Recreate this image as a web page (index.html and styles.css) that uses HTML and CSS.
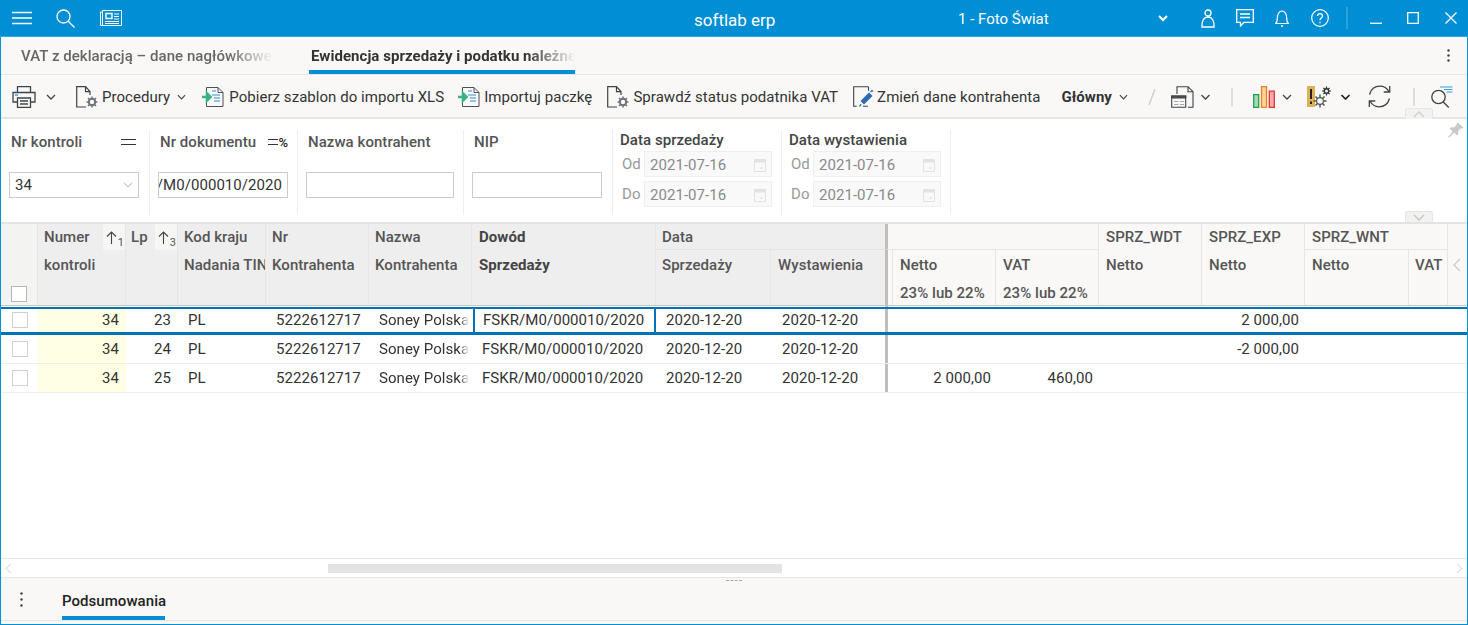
FILE: index.html
```html
<!DOCTYPE html>
<html lang="pl">
<head>
<meta charset="utf-8">
<title>softlab erp</title>
<link rel="stylesheet" href="styles.css">
</head>
<body>
<div class="app">
  <header class="titlebar">
    <svg class="ic m12" width="20" height="14" viewBox="0 0 20 14"><path d="M0 1.500h20M0 7h20M0 12.500h20" stroke="#fff" stroke-width="1.300"/></svg>
    <svg class="ic m24" width="19" height="19" viewBox="0 0 19 19" fill="none" stroke="#fff" stroke-width="1.300"><circle cx="7.500" cy="7.500" r="6.500"/><path d="M12 12l6.500 6.500"/></svg>
    <svg class="ic m25" width="22" height="18" viewBox="0 0 22 18" fill="none" stroke="#fff"><path d="M2.500 1.500h19v15h-19zM2.500 3H.5v13.500h2"/><path d="M6 4.500h6v5H6z" stroke-width="1.400"/><path d="M14 5h5M14 7.500h5M14 10h5M5 12.500h14M5 14.500h14" stroke-width="1.200"/></svg>
    <span class="apptitle">softlab erp</span>
    <span class="company">1 - Foto Świat</span>
    <svg class="ic m110" width="10" height="7" viewBox="0 0 10 7" fill="none" stroke="#fff" stroke-width="2"><path d="M1 1l4 4 4-4"/></svg>
    <svg class="ic m33" width="14" height="19" viewBox="0 0 14 19" fill="none" stroke="#fff" stroke-width="1.300"><circle cx="7" cy="4" r="3"/><path d="M1 18c-.5-6 2-10 6-10s6.500 4 6 10z"/></svg>
    <svg class="ic m21" width="18" height="18" viewBox="0 0 18 18" fill="none" stroke="#fff" stroke-width="1.300"><path d="M.7.7h16.600v12.600H8L4.500 17v-3.700H.7z"/><path d="M4 5h10M4 8.500h10"/></svg>
    <svg class="ic m21" width="14" height="18" viewBox="0 0 14 18" fill="none" stroke="#fff" stroke-width="1.200"><path d="M.5 14.500c1.500-1 1.800-2.500 1.800-5.500 0-4 2-7 4.700-7s4.700 3 4.700 7c0 3 .3 4.500 1.800 5.500z"/><path d="M6 17h2" stroke-width="1.500"/></svg>
    <svg class="ic m22" width="18" height="18" viewBox="0 0 18 18" fill="none" stroke="#fff" stroke-width="1.200"><circle cx="9" cy="9" r="8.300"/><path d="M6.500 7c0-3.300 5-3.300 5 0 0 2-2.500 2-2.500 4.200M9 12.800v1.400" stroke-width="1.300"/></svg>
    <span class="titlesep"></span>
    <svg class="ic m22" width="12" height="12" viewBox="0 0 12 12" fill="none" stroke="#fff" stroke-width="1.300"><path d="M0 11.300h12"/></svg>
    <svg class="ic m25" width="12" height="12" viewBox="0 0 12 12" fill="none" stroke="#fff" stroke-width="1.300"><path d="M.7.7h10.600v10.600H.7z"/></svg>
    <svg class="ic m26" width="12" height="12" viewBox="0 0 12 12" fill="none" stroke="#fff" stroke-width="1.300"><path d="M.5.5l11 11M11.500.5l-11 11"/></svg>
  </header>

  <nav class="tabs">
    <span class="tab tab-first"><span class="fade">VAT z deklaracją – dane nagłówkowe</span></span>
    <span class="tab tab-active"><span class="fade">Ewidencja sprzedaży i podatku należne</span></span>
    <span class="spacer"></span>
    <svg class="ic kebab" width="3" height="13" viewBox="0 0 3 13" fill="#444"><circle cx="1.500" cy="1.500" r="1.200"/><circle cx="1.500" cy="6.500" r="1.200"/><circle cx="1.500" cy="11.500" r="1.200"/></svg>
  </nav>

  <div class="toolbar">
    <svg class="ic t12" width="24" height="22" viewBox="0 0 24 22" fill="none" stroke="#3c4348" stroke-width="1.300"><path d="M5.500 6V.7h13V6M5 16H1V6.500h22V16h-4"/><path d="M5.500 12h13v9.300h-13z"/><path d="M8 15h8M8 18h8"/><path d="M3 9h3" stroke="#2f8fd0"/></svg>
    <svg class="ic t10 chev" width="10" height="6" viewBox="0 0 10 6"><path d="M1 1l4 4 4-4"/></svg>
    <svg class="ic t20" width="22" height="22" viewBox="0 0 22 22" fill="none" stroke="#3c4348" stroke-width="1.200"><path d="M10 21H.7V.7h8.800L14 5.500V9M9.500.7v5H14"/><circle cx="16" cy="16" r="3.200" stroke="#6d7378" stroke-width="2"/><path d="M16 10.500v2M16 19.500v2M10.500 16h2M19.500 16h2M12 12l1.500 1.500M18.500 18.500L20 20M20 12l-1.500 1.500M13.500 18.500L12 20" stroke="#6d7378" stroke-width="1.500"/></svg>
    <span class="tl t4">Procedury</span>
    <svg class="ic t7 chev" width="9" height="6" viewBox="0 0 10 6"><path d="M1 1l4 4 4-4"/></svg>
    <svg class="ic t15" width="23" height="20" viewBox="0 0 23 20" fill="none"><path d="M5.500 5V.5h11.500l5 5v14H5.500v-4M17 .5v5h5" stroke="#4a5157" stroke-width="1"/><path d="M11 4h4M11 8h8M13 11h6M13 14h6" stroke="#2f8fd0" stroke-width="1.200"/><path d="M1 10h4.500M6 6.500l3.500 3.500L6 13.500z" fill="#3cb187" stroke="#3cb187" stroke-width="2.600"/></svg>
    <span class="tl t5">Pobierz szablon do importu XLS</span>
    <svg class="ic t13" width="23" height="20" viewBox="0 0 23 20" fill="none"><path d="M5.500 5V.5h11.500l5 5v14H5.500v-4M17 .5v5h5" stroke="#4a5157" stroke-width="1"/><path d="M11 4h4M11 8h8M13 11h6M13 14h6" stroke="#2f8fd0" stroke-width="1.200"/><path d="M1 10h4.500M6 6.500l3.500 3.500L6 13.500z" fill="#3cb187" stroke="#3cb187" stroke-width="2.600"/></svg>
    <span class="tl t4">Importuj paczkę</span>
    <svg class="ic t15" width="22" height="22" viewBox="0 0 22 22" fill="none" stroke="#3c4348" stroke-width="1.200"><path d="M10 21H.7V.7h8.800L14 5.500V9M9.500.7v5H14"/><circle cx="16" cy="16" r="3.200" stroke="#6d7378" stroke-width="2"/><path d="M16 10.500v2M16 19.500v2M10.500 16h2M19.500 16h2M12 12l1.500 1.500M18.500 18.500L20 20M20 12l-1.500 1.500M13.500 18.500L12 20" stroke="#6d7378" stroke-width="1.500"/></svg>
    <span class="tl t4">Sprawdź status podatnika VAT</span>
    <svg class="ic t15" width="21" height="21" viewBox="0 0 21 21" fill="none"><path d="M15.500 .7H.7v19.600h3M15.500 .7v4M10 20.300h5" stroke="#3c4348" stroke-width="1.100"/><path d="M6.500 20.500l1.500-2.500M8.500 15l7.500-7.500 2.500 2.500-7.500 7.500z" fill="#2b6cb0" stroke="#2b6cb0" stroke-width="1.400"/><path d="M17.500 6l1.500-1.500 1 1" stroke="#2b6cb0" stroke-width="1.200"/></svg>
    <span class="tl t3">Zmień dane kontrahenta</span>
    <span class="tl strong t21">Główny</span>
    <svg class="ic t7 chev" width="9" height="6" viewBox="0 0 10 6"><path d="M1 1l4 4 4-4"/></svg>
    <svg class="ic t20" width="8" height="18" viewBox="0 0 8 18" fill="none" stroke="#cfcfcf" stroke-width="1.500"><path d="M7 1L1 17"/></svg>
    <svg class="ic t15" width="23" height="22" viewBox="0 0 23 22" fill="none" stroke="#3c4348" stroke-width="1.100"><path d="M6 8V.7h11l5 5v15.600h-5M17 .7v5h5"/><path d="M.7 10h14v11.300H.7z" fill="#f9f8f6"/><path d="M.7 10h14v2H.7z" fill="#555"/><path d="M3 15.500h4.500M9 15.500h4M3 18.500h4.500M9 18.500h4" stroke="#aaa"/></svg>
    <svg class="ic t6 chev" width="11" height="6" viewBox="0 0 10 6"><path d="M1 1l4 4 4-4"/></svg>
    <span class="vsep t20"></span>
    <svg class="ic t20" width="22" height="22" viewBox="0 0 22 22"><path d="M.7 8.700h5v12.600h-5z" fill="#a6d8b5" stroke="#1ba24d" stroke-width="1.300"/><path d="M8.500.7h5v20.600h-5z" fill="#fbd596" stroke="#ee7d2b" stroke-width="1.300"/><path d="M16.300 5.200h5v16.100h-5z" fill="#f5abab" stroke="#e23333" stroke-width="1.300"/></svg>
    <svg class="ic t7 chev" width="10" height="6" viewBox="0 0 10 6"><path d="M1 1l4 4 4-4"/></svg>
    <svg class="ic t15" width="24" height="22" viewBox="0 0 24 22" fill="none"><path d="M0 0h8v21H0z" fill="#dcb257"/><path d="M4 3v10M4 15.500v2.500" stroke="#222" stroke-width="2"/><circle cx="13" cy="15" r="3.400" stroke="#50575c" stroke-width="1.200"/><path d="M13 8.500v2.500M13 19v2.500M6.500 15H9M17 15h2.500M8.500 10.500l2 2M15.500 17.500l2 2M17.500 10.500l-2 2M10.500 17.500l-2 2" stroke="#50575c" stroke-width="1.500"/><circle cx="19.500" cy="5" r="2.200" stroke="#2c3236" stroke-width="1.400"/><path d="M19.500 .5v2M19.500 7.500v2M15 5h2M22 5h2M16.300 1.800l1.400 1.400M21.300 6.800l1.400 1.400M22.700 1.800l-1.400 1.400M17.700 6.800l-1.400 1.400" stroke="#2c3236" stroke-width="1.200"/></svg>
    <svg class="ic t9 chev chev-b" width="11" height="6" viewBox="0 0 10 6"><path d="M1 1l4 4 4-4"/></svg>
    <svg class="ic t17" width="23" height="23" viewBox="0 0 23 23" fill="none" stroke="#3c4348" stroke-width="1.300"><path d="M1.500 9.500C3 4 7 1.200 12 1.200c4 0 7 2 9 5.500M21.700 1v6h-6M21.500 13.500c-1.500 5.500-5.500 8.300-10.500 8.300-4 0-7-2-9-5.500M1.300 22v-6h6"/></svg>
    <span class="vsep t22"></span>
    <svg class="ic t16" width="22" height="22" viewBox="0 0 22 22" fill="none"><circle cx="7.500" cy="11" r="6.700" stroke="#3c4348" stroke-width="1.300"/><path d="M12.300 16l5.500 5.500" stroke="#3c4348" stroke-width="1.300"/><path d="M9 1h12.500M13 3.500h8.500M15.500 6h6" stroke="#2f9fe0" stroke-width="1.100"/></svg>
    <span class="collapse collapse-up"><svg width="12" height="7" viewBox="0 0 12 7" fill="none" stroke="#cfcfcf" stroke-width="1.300"><path d="M1 6l5-5 5 5"/></svg></span>
  </div>

  <section class="filters">
    <div class="fgroup f1">
      <div class="flabel"><span>Nr kontroli</span><span class="op"><span class="eq"></span></span></div>
      <div class="fcombo"><span>34</span><svg width="10" height="6" viewBox="0 0 10 6" fill="none" stroke="#ccc" stroke-width="1.200"><path d="M1 1l4 4 4-4"/></svg></div>
    </div>
    <div class="fgroup f2">
      <div class="flabel"><span>Nr dokumentu</span><span class="op"><span class="eq eq-s"></span><b>%</b></span></div>
      <div class="finput finput-clip"><span>FSKR/M0/000010/2020</span></div>
    </div>
    <div class="fgroup f3">
      <div class="flabel"><span>Nazwa kontrahent</span></div>
      <div class="finput"></div>
    </div>
    <div class="fgroup f4">
      <div class="flabel"><span>NIP</span></div>
      <div class="finput"></div>
    </div>
    <div class="fgroup fdate">
      <div class="dlabel">Data sprzedaży</div>
      <div class="drow"><span>Od</span><div class="dinput"><span>2021-07-16</span><svg width="13" height="14" viewBox="0 0 13 14"><path d="M1.500 1.500v12h11v-12z" fill="none" stroke="#e2e2e2"/><path d="M1 2h11v2.500H1z" fill="#e2e2e2"/><path d="M7.500 9h2v2h-2z" fill="#e2e2e2"/></svg></div></div>
      <div class="drow"><span>Do</span><div class="dinput"><span>2021-07-16</span><svg width="13" height="14" viewBox="0 0 13 14"><path d="M1.500 1.500v12h11v-12z" fill="none" stroke="#e2e2e2"/><path d="M1 2h11v2.500H1z" fill="#e2e2e2"/><path d="M7.500 9h2v2h-2z" fill="#e2e2e2"/></svg></div></div>
    </div>
    <div class="fgroup fdate">
      <div class="dlabel">Data wystawienia</div>
      <div class="drow"><span>Od</span><div class="dinput"><span>2021-07-16</span><svg width="13" height="14" viewBox="0 0 13 14"><path d="M1.500 1.500v12h11v-12z" fill="none" stroke="#e2e2e2"/><path d="M1 2h11v2.500H1z" fill="#e2e2e2"/><path d="M7.500 9h2v2h-2z" fill="#e2e2e2"/></svg></div></div>
      <div class="drow"><span>Do</span><div class="dinput"><span>2021-07-16</span><svg width="13" height="14" viewBox="0 0 13 14"><path d="M1.500 1.500v12h11v-12z" fill="none" stroke="#e2e2e2"/><path d="M1 2h11v2.500H1z" fill="#e2e2e2"/><path d="M7.500 9h2v2h-2z" fill="#e2e2e2"/></svg></div></div>
    </div>
    <svg class="pin" width="16" height="16" viewBox="0 0 16 16" fill="#c9c9c9"><path d="M9.500.5l6 5-1.500 1.300-1-.5-3 3 .3 3-1.300 1.200-3-3L1 15.500 0 15l4.500-5.500-2.800-3L3 5.200l3 .3 3-3-.5-1z"/></svg>
    <span class="collapse collapse-down"><svg width="12" height="7" viewBox="0 0 12 7" fill="none" stroke="#c4c4c4" stroke-width="1.300"><path d="M1 1l5 5 5-5"/></svg></span>
  </section>

  <section class="grid">
    <div class="ghead">
      <div class="hc hc-check"><span class="cb cb-head"></span></div>
      <div class="hc hc-numer"><div class="hline"><span>Numer</span><span class="sort"><svg width="11" height="13" viewBox="0 0 11 13" fill="none" stroke="#444" stroke-width="1.100"><path d="M5.500 13V1M1 5.500L5.500 1 10 5.500"/></svg><i>1</i></span></div><div class="hline">kontroli</div></div>
      <div class="hc hc-lp"><div class="hline"><span>Lp</span><span class="sort"><svg width="11" height="13" viewBox="0 0 11 13" fill="none" stroke="#444" stroke-width="1.100"><path d="M5.500 13V1M1 5.500L5.500 1 10 5.500"/></svg><i>3</i></span></div></div>
      <div class="hc hc-kod"><div class="hline">Kod kraju</div><div class="hline clip">Nadania TIN</div></div>
      <div class="hc hc-nr"><div class="hline">Nr</div><div class="hline">Kontrahenta</div></div>
      <div class="hc hc-naz"><div class="hline">Nazwa</div><div class="hline">Kontrahenta</div></div>
      <div class="hc hc-dow strong"><div class="hline">Dowód</div><div class="hline">Sprzedaży</div></div>
      <div class="hc hc-data"><div class="hline">Data</div></div>
      <div class="hc hc-dsp"><div class="hline">Sprzedaży</div></div>
      <div class="hc hc-dwy"><div class="hline">Wystawienia</div></div>
      <div class="hc lt hc-blank"></div>
      <div class="hc lt hc-gap"></div>
      <div class="hc lt hc-net"><div class="hline">Netto</div><div class="hline">23% lub 22%</div></div>
      <div class="hc lt hc-vat"><div class="hline">VAT</div><div class="hline">23% lub 22%</div></div>
      <div class="hc lt hc-wdt"><div class="hline">SPRZ_WDT</div><div class="hline">Netto</div></div>
      <div class="hc lt hc-exp"><div class="hline">SPRZ_EXP</div><div class="hline">Netto</div></div>
      <div class="hc lt hc-wnt"><div class="hline">SPRZ_WNT</div></div>
      <div class="hc lt hc-wn"><div class="hline">Netto</div></div>
      <div class="hc lt hc-wv"><div class="hline">VAT</div></div>
      <div class="hc lt hc-arrow"><svg width="8" height="14" viewBox="0 0 8 14" fill="none" stroke="#c8c8c8" stroke-width="1.200"><path d="M7 1L1 7l6 6"/></svg></div>
    </div>
    <div class="gbody">
      <div class="row row-sel">
        <div class="c"><span class="cb"></span></div><div class="c c-key">34</div><div class="c r">23</div><div class="c pad">PL</div><div class="c pad">5222612717</div><div class="c pad fadecell">Soney Polska</div><div class="c pad c-cur">FSKR/M0/000010/2020</div><div class="c pad">2020-12-20</div><div class="c pad pad-w">2020-12-20</div><div class="c c-div"></div><div class="c money"></div><div class="c money"></div><div class="c money"></div><div class="c money">2 000,00</div><div class="c"></div><div class="c"></div><div class="c"></div>
      </div>
      <div class="row">
        <div class="c"><span class="cb"></span></div><div class="c c-key">34</div><div class="c r">24</div><div class="c pad">PL</div><div class="c pad">5222612717</div><div class="c pad fadecell">Soney Polska</div><div class="c pad">FSKR/M0/000010/2020</div><div class="c pad">2020-12-20</div><div class="c pad pad-w">2020-12-20</div><div class="c c-div"></div><div class="c money"></div><div class="c money"></div><div class="c money"></div><div class="c money">-2 000,00</div><div class="c"></div><div class="c"></div><div class="c"></div>
      </div>
      <div class="row">
        <div class="c"><span class="cb"></span></div><div class="c c-key">34</div><div class="c r">25</div><div class="c pad">PL</div><div class="c pad">5222612717</div><div class="c pad fadecell">Soney Polska</div><div class="c pad">FSKR/M0/000010/2020</div><div class="c pad">2020-12-20</div><div class="c pad pad-w">2020-12-20</div><div class="c c-div"></div><div class="c money">2 000,00</div><div class="c money">460,00</div><div class="c money"></div><div class="c money"></div><div class="c"></div><div class="c"></div><div class="c"></div>
      </div>
    </div>
    <div class="hscroll">
      <svg width="7" height="11" viewBox="0 0 7 11" fill="none" stroke="#e2e2e2" stroke-width="1.200"><path d="M6 1L1 5.500 6 10"/></svg>
      <div class="track"><span class="thumb"></span></div>
      <svg width="7" height="11" viewBox="0 0 7 11" fill="none" stroke="#e2e2e2" stroke-width="1.200"><path d="M1 1l5 4.500L1 10"/></svg>
    </div>
  </section>

  <footer class="bottom">
    <span class="grip"></span>
    <div class="btabs">
      <svg class="ic kebab2" width="3" height="15" viewBox="0 0 3 15" fill="#444"><circle cx="1.500" cy="1.500" r="1.200"/><circle cx="1.500" cy="7.500" r="1.200"/><circle cx="1.500" cy="13.500" r="1.200"/></svg>
      <span class="btab">Podsumowania</span>
    </div>
  </footer>
</div>
</body>
</html>
```

FILE: styles.css
```css
*, *::before, *::after { box-sizing: border-box; }
html, body { margin: 0; height: 100%; overflow: hidden; }
body { font-family: Roboto, "Liberation Sans", sans-serif; font-size: 15px; letter-spacing: .05px; color: #333; }
.ic { flex: none; display: block; }
.app { height: 625px; display: flex; flex-direction: column; border: 1px solid #0090d7; border-top: 0; background: #fff; }

/* title bar */
.titlebar { height: 37px; margin: 0 -1px; flex: none; display: flex; align-items: center; background: #008ed4; color: #fff; border-bottom: 1px solid #30a5de; position: relative; }
.apptitle { position: absolute; left: 694px; top: 10px; font-size: 17px; line-height: 20px; letter-spacing: 0; }
.company { margin-left: 836px; padding-top: 1px; font-size: 15px; width: 90px; white-space: nowrap; letter-spacing: 0; }
.m12 { margin-left: 12px; } .m24 { margin-left: 24px; } .m25 { margin-left: 25px; } .m110 { margin-left: 110px; }
.m33 { margin-left: 33px; } .m22 { margin-left: 22px; } .m21 { margin-left: 21px; } .m26 { margin-left: 26px; }
.titlesep { width: 2px; height: 22px; margin-left: 17px; background: #2ba0da; flex: none; }

/* tabs */
.tabs { height: 38px; flex: none; display: flex; align-items: center; background: #f9f8f6; border-bottom: 1px solid #e6e6e6; position: relative; padding-left: 20px; }
.tab { height: 37px; display: block; line-height: 38px; white-space: nowrap; }
.fade { display: block; overflow: hidden; -webkit-mask-image: linear-gradient(to right, #000 82%, transparent 100%); mask-image: linear-gradient(to right, #000 82%, transparent 100%); }
.tab-first { width: 252px; font-weight: 500; color: #666; }
.tab-first .fade { width: 252px; }
.tab-active { width: 266px; margin-left: 36px; padding-left: 2px; font-weight: 700; color: #333; border-bottom: 4px solid #008ed4; position: relative; }
.tab-active .fade { width: 264px; height: 33px; }
.spacer { flex: 1; }
.kebab { margin-right: 17px; }

/* toolbar */
.toolbar { height: 44px; flex: none; display: flex; align-items: center; padding-top: 1px; background: #f9f8f6; border-bottom: 2px solid #e6e6e6; position: relative; }
.tl { white-space: nowrap; flex: none; }
.strong { font-weight: 700; }
.chev { fill: none; stroke: #444; stroke-width: 1.300; }
.chev-b { stroke: #222; stroke-width: 1.700; }
.t3 { margin-left: 3px; } .t4 { margin-left: 4px; } .t5 { margin-left: 5px; } .t6 { margin-left: 6px; } .t7 { margin-left: 7px; } .t9 { margin-left: 9px; } .t10 { margin-left: 10px; }
.t12 { margin-left: 11px; } .t13 { margin-left: 13px; } .t15 { margin-left: 15px; } .t16 { margin-left: 16px; } .t17 { margin-left: 17px; } .t20 { margin-left: 20px; } .t21 { margin-left: 21px; } .t22 { margin-left: 22px; }
.vsep { width: 2px; height: 18px; background: #dcdcdc; flex: none; }
.collapse { position: absolute; left: 1404px; width: 28px; height: 11px; display: flex; align-items: center; justify-content: center; background: #f2f2f0; border: 1px solid #e6e6e6; }
.collapse-up { bottom: -2px; border-bottom: 0; border-radius: 3px 3px 0 0; }

/* filters */
.filters { height: 103px; flex: none; display: flex; align-items: flex-start; background: #fff; position: relative; padding-top: 11px; }
.fgroup { height: 85px; border-right: 1px solid #eee; flex: none; }
.f1 { width: 149px; padding: 0 10px 0 8px; }
.f2 { width: 148px; padding: 0 9px 0 8px; }
.f3 { width: 166px; padding: 0 9px 0 8px; }
.f4 { width: 149px; padding: 0 10px 0 8px; }
.flabel { height: 24px; display: flex; align-items: center; justify-content: space-between; padding-left: 2px; color: #555; font-weight: 500; white-space: nowrap; }
.op { display: flex; align-items: center; font-size: 13px; color: #222; padding-right: 3px; }
.f2 .op { padding-right: 0; }
.op b { font-weight: 500; }
.eq { display: block; width: 15px; height: 6px; border-top: 1.500px solid #333; border-bottom: 1.500px solid #333; }
.eq-s { width: 10px; }
.fcombo, .finput { height: 26px; margin-top: 18px; border: 1px solid #ccc; display: flex; align-items: center; justify-content: space-between; padding: 0 5px; background: #fff; }
.finput-clip { overflow: hidden; justify-content: flex-end; padding: 0 5px 0 3px; white-space: nowrap; }
.finput-clip span { flex: none; }
.fdate { width: 169px; padding: 0 9px; }
.dlabel { height: 21px; line-height: 20px; margin-left: -2px; color: #444; font-weight: 500; white-space: nowrap; }
.drow { display: flex; align-items: center; justify-content: space-between; height: 26px; margin-top: 4px; color: #999; }
.dlabel + .drow { margin-top: 0; }
.dinput { width: 128px; height: 26px; border: 1px solid #efefef; background: #f9f9f9; display: flex; align-items: center; justify-content: space-between; padding: 1px 5px 0; color: #8a8a8a; }
.dinput svg { flex: none; }
.pin { position: absolute; right: 3px; top: 3px; }
.filters .collapse-down { left: 1404px; top: 92px; border-bottom: 0; border-radius: 3px 3px 0 0; }

/* grid */
.grid { flex: 1; display: flex; flex-direction: column; min-height: 0; border-top: 2px solid #e3e3e3; }
.ghead { height: 82px; flex: none; display: grid;
  grid-template-columns: 37px 88px 52px 88px 103px 103px 184px 115px 114px 3px 5px 103px 103px 103px 103px 104px 39px 19px;
  grid-template-rows: 26px 55px; background: #eee; border-bottom: 1px solid #c8c8c8; }
.hc { padding: 0 0 0 6px; border-right: 1px solid #e6e6e6; color: #555; font-weight: 500; white-space: nowrap; overflow: hidden; }
.hline { height: 28px; line-height: 27px; display: flex; justify-content: space-between; }
.hline.clip { overflow: hidden; }
.hc.strong { font-weight: 700; padding-left: 7px; color: #444; }
.lt { background: #f9f8f6; padding-left: 7px; }
.hc-check { grid-row: 1 / 3; grid-column: 1; display: flex; align-items: flex-end; padding: 0 0 3px 10px; background: #f3f3f2; }
.hc-numer { grid-row: 1 / 3; grid-column: 2; padding-right: 0; }
.hc-lp { grid-row: 1 / 3; grid-column: 3; padding-left: 5px; padding-right: 0; }
.hc-kod { grid-row: 1 / 3; grid-column: 4; }
.hc-nr { grid-row: 1 / 3; grid-column: 5; }
.hc-naz { grid-row: 1 / 3; grid-column: 6; }
.hc-dow { grid-row: 1 / 3; grid-column: 7; }
.hc-data { grid-row: 1; grid-column: 8 / 10; border-bottom: 1px solid #e4e4e4; border-right: 0; }
.hc-dsp { grid-row: 2; grid-column: 8; padding-top: 2px; }
.hc-dwy { grid-row: 2; grid-column: 9; padding: 2px 0 0 7px; border-right: 0; }
.hc-blank { grid-row: 1; grid-column: 10 / 14; border-left: 3px solid #bdbdbd; border-bottom: 1px solid #e6e6e6; }
.hc-gap { grid-row: 2; grid-column: 10 / 12; border-left: 3px solid #bdbdbd; padding: 0; }
.hc-net { grid-row: 2; grid-column: 12; padding-top: 2px; }
.hc-vat { grid-row: 2; grid-column: 13; padding-top: 2px; }
.hc-wdt { grid-row: 1 / 3; grid-column: 14; }
.hc-exp { grid-row: 1 / 3; grid-column: 15; }
.hc-wnt { grid-row: 1; grid-column: 16 / 18; border-bottom: 1px solid #e6e6e6; }
.hc-wn { grid-row: 2; grid-column: 16; padding-top: 2px; }
.hc-wv { grid-row: 2; grid-column: 17; padding: 2px 0 0 6px; }
.hc-arrow { grid-row: 1 / 3; grid-column: 18; border-right: 0; padding: 34px 0 0 5px; }
.sort { width: 22px; height: 26px; background: #f6f6f5; display: flex; align-items: center; padding-left: 3px; position: relative; font-weight: 400; }
.sort i { position: absolute; right: 1px; bottom: 1px; font-size: 11px; line-height: 12px; font-style: normal; }
.cb { display: block; width: 16px; height: 16px; border: 1px solid #d0d0d0; background: #fff; }
.cb-head { border-color: #b5b5b5; }
.gbody { flex: 1; min-height: 0; }
.row { height: 29px; display: grid; border-bottom: 1px solid #eee; position: relative;
  grid-template-columns: 37px 88px 52px 88px 103px 103px 184px 115px 114px 3px 108px 102px 103px 103px 104px 39px 19px; color: #333; }
.c { line-height: 28px; white-space: nowrap; overflow: hidden; }
.c:first-child { padding: 6px 0 0 11px; }
.c-key { background: #ffffe4; text-align: right; padding-right: 7px; }
.r { text-align: right; padding-right: 7px; }
.money { text-align: right; padding-right: 5px; }
.pad { padding-left: 10px; }
.pad-w { padding-left: 11px; }
.fadecell { padding-right: 5px; -webkit-mask-image: linear-gradient(to right, #000 88%, transparent 97%); mask-image: linear-gradient(to right, #000 88%, transparent 97%); }
.c-div { background: #bdbdbd; }
.row-sel { border-bottom: 0; }
.row-sel::after { content: ""; position: absolute; left: 0; right: 0; top: 1px; height: 28px; border-top: 2px solid #0073b5; border-bottom: 3px solid #0073b5; }
.c-cur { position: relative; padding-left: 11px; }
.c-cur::after { content: ""; position: absolute; left: 1px; right: 0; top: 1px; height: 27px; border-left: 2px solid #0073b5; border-right: 2px solid #0073b5; }
.hscroll { height: 20px; flex: none; display: flex; align-items: center; justify-content: space-between; padding: 0 4px; border-top: 1px solid #e6e6e6; border-bottom: 1px solid #e6e6e6; }
.track { flex: 1; height: 9px; padding-left: 316px; }
.thumb { display: block; width: 454px; height: 9px; background: #e3e3e3; }

/* bottom */
.bottom { height: 46px; flex: none; background: #f9f8f6; position: relative; }
.grip { position: absolute; left: 725px; top: 2px; width: 16px; height: 1px; border-top: 1px dashed #aaa; }
.btabs { height: 43px; display: flex; align-items: center; border-bottom: 1px solid #e6e6e6; }
.kebab2 { margin: 0 0 0 19px; }
.btab { margin-left: 39px; height: 42px; width: 103px; padding-top: 14px; font-weight: 500; color: #222; border-bottom: 4px solid #008ed4; white-space: nowrap; }
```
